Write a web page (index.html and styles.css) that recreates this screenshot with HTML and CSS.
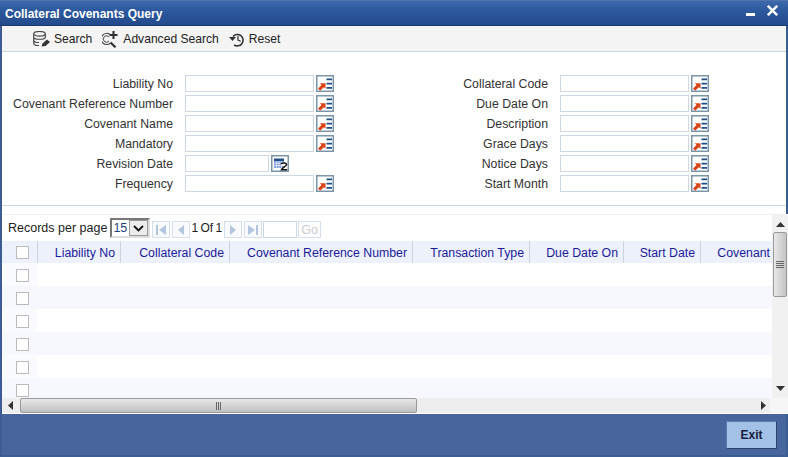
FILE: index.html
```html
<!DOCTYPE html>
<html lang="en">
<head>
<meta charset="utf-8">
<title>Collateral Covenants Query</title>
<link rel="stylesheet" href="styles.css">
</head>
<body>
<svg class="defs" width="0" height="0" aria-hidden="true">
  <defs>
    <symbol id="lov" viewBox="0 0 18 17">
      <rect x="0.750" y="0.750" width="16.500" height="15.500" fill="#fff" stroke="#7c94a8" stroke-width="1.500"/>
      <path d="M2 13.500 5.500 10 3.800 8.200H9.500V13.800L7.800 12.200 4.200 15.700Z" fill="#d9431a"/>
      <path d="M10.500 3.500h5.500v1.700h-5.500zM10.500 7.800h5.500v1.700h-5.500zM10.500 12h5.500v1.700h-5.500z" fill="#1f4f86"/>
    </symbol>
  </defs>
</svg>
<div class="window">
  <header class="titlebar">
    <h1 class="title">Collateral Covenants Query</h1>
    <div class="winctl">
      <svg class="win-min" width="9" height="3" viewBox="0 0 9 3"><rect width="9" height="3" fill="#fff"/></svg>
      <svg width="11" height="11" viewBox="0 0 11 11"><path d="M.8.8 10.200 10.200M10.200.8 .8 10.200" stroke="#fff" stroke-width="2.400" fill="none"/></svg>
    </div>
  </header>

  <nav class="toolbar">
    <span class="tool">
      <svg width="17" height="16" viewBox="0 0 17 16" fill="none" stroke="#444" stroke-width="1.100">
        <ellipse cx="6.500" cy="2.800" rx="5.800" ry="2.300"/>
        <path d="M.7 2.800v9.400c0 1.400 2.500 2.300 5.300 2.300M12.300 2.800v4.500M.7 6c0 1.400 2.600 2.300 5.800 2.300S12.300 7.400 12.300 6M.7 9.200c0 1.400 2.500 2.300 5.300 2.300"/>
        <path d="M8.500 15.500l1-3 4.500-4 3 2.500-4.500 4z" fill="#333" stroke="none"/>
      </svg>
      Search
    </span>
    <span class="tool">
      <svg width="17" height="17" viewBox="0 0 17 17" fill="none" stroke="#444">
        <path d="M8 3.500A5.500 5.500 0 1 0 8.500 12" stroke-width="1.200"/>
        <path d="M7 6A3.200 3.200 0 1 0 7 10" stroke-width="1"/>
        <path d="M8.500 11.500l5 4.800" stroke="#333" stroke-width="2.200"/>
        <path d="M11.500 0v8M7.500 4h8" stroke="#333" stroke-width="2.100"/>
      </svg>
      Advanced Search
    </span>
    <span class="tool">
      <svg width="16" height="15" viewBox="0 0 16 15" fill="none" stroke="#333" stroke-width="1.600">
        <path d="M4 4.500A5.700 5.700 0 1 1 5 12.800"/>
        <path d="M0 5h7L3.500 9Z" fill="#333" stroke="none"/>
        <path d="M9 4v4l2.700 1.300" stroke-width="1.200"/>
      </svg>
      Reset
    </span>
  </nav>

  <section class="form">
    <div class="field"><label>Liability No</label><span class="input"></span><svg class="lov"><use href="#lov"/></svg></div>
    <div class="field"><label>Collateral Code</label><span class="input"></span><svg class="lov"><use href="#lov"/></svg></div>
    <div class="field"><label>Covenant Reference Number</label><span class="input"></span><svg class="lov"><use href="#lov"/></svg></div>
    <div class="field"><label>Due Date On</label><span class="input"></span><svg class="lov"><use href="#lov"/></svg></div>
    <div class="field"><label>Covenant Name</label><span class="input"></span><svg class="lov"><use href="#lov"/></svg></div>
    <div class="field"><label>Description</label><span class="input"></span><svg class="lov"><use href="#lov"/></svg></div>
    <div class="field"><label>Mandatory</label><span class="input"></span><svg class="lov"><use href="#lov"/></svg></div>
    <div class="field"><label>Grace Days</label><span class="input"></span><svg class="lov"><use href="#lov"/></svg></div>
    <div class="field"><label>Revision Date</label><span class="input short"></span>
      <svg class="lov" viewBox="0 0 18 17">
        <rect x="0.750" y="0.750" width="16.500" height="15.500" fill="#fff" stroke="#7c94a8" stroke-width="1.500"/>
        <rect x="3" y="3.500" width="10" height="2.500" fill="#1f4f86"/>
        <rect x="3" y="6" width="10" height="7" fill="#7f9fdc"/>
        <path d="M5.500 6v7M8 6v7M10.500 6v7M3 8.300h10M3 10.600h10" stroke="#fff" stroke-width=".6"/>
        <path d="M10 9.200c.4-1.700 5.600-1.800 5.600.4 0 1.700-4.300 2.800-5.200 5.200h5.800" fill="#fff" stroke="#111" stroke-width="1.500"/>
      </svg>
    </div>
    <div class="field"><label>Notice Days</label><span class="input"></span><svg class="lov"><use href="#lov"/></svg></div>
    <div class="field"><label>Frequency</label><span class="input"></span><svg class="lov"><use href="#lov"/></svg></div>
    <div class="field"><label>Start Month</label><span class="input"></span><svg class="lov"><use href="#lov"/></svg></div>
  </section>
  <div class="gap"></div>

  <section class="results">
    <div class="results-main">
      <div class="pager">
        <span class="pager-label">Records per page</span>
        <span class="select"><span class="select-value">15</span><span class="select-btn"><svg width="11" height="7" viewBox="0 0 11 7"><path d="M1 1 5.500 5.500 10 1" fill="none" stroke="#111" stroke-width="1.800"/></svg></span></span>
        <span class="pbtn first"><svg width="12" height="12" viewBox="0 0 12 12"><path d="M1 1h2v10H1zM11 1v10L4 6z" fill="#b4c6de"/></svg></span>
        <span class="pbtn"><svg width="12" height="12" viewBox="0 0 12 12"><path d="M9 1v10L3 6z" fill="#b4c6de"/></svg></span>
        <span class="pages">1 Of 1</span>
        <span class="pbtn"><svg width="12" height="12" viewBox="0 0 12 12"><path d="M3 1v10l6-5z" fill="#b4c6de"/></svg></span>
        <span class="pbtn"><svg width="12" height="12" viewBox="0 0 12 12"><path d="M9 1h2v10H9zM1 1v10l7-5z" fill="#b4c6de"/></svg></span>
        <span class="pinput"></span>
        <span class="go">Go</span>
      </div>
      <div class="grid-head">
        <span class="cell-check"><i class="check"></i></span>
        <span class="th w1">Liability No</span>
        <span class="th w2">Collateral Code</span>
        <span class="th w3">Covenant Reference Number</span>
        <span class="th w4">Transaction Type</span>
        <span class="th w5">Due Date On</span>
        <span class="th w6">Start Date</span>
        <span class="th w7">Covenant</span>
      </div>
      <div class="grid-row"><span class="cell-check"><i class="check"></i></span></div>
      <div class="grid-row alt"><span class="cell-check"><i class="check"></i></span></div>
      <div class="grid-row"><span class="cell-check"><i class="check"></i></span></div>
      <div class="grid-row alt"><span class="cell-check"><i class="check"></i></span></div>
      <div class="grid-row"><span class="cell-check"><i class="check"></i></span></div>
      <div class="grid-row alt"><span class="cell-check"><i class="check"></i></span></div>
    </div>
    <div class="vscroll">
      <svg class="arrow" width="9" height="5" viewBox="0 0 9 5"><path d="M4.500 0 9 5H0z" fill="#333"/></svg>
      <div class="vthumb"><i></i><i></i><i></i><i></i></div>
      <svg class="arrow end" width="9" height="5" viewBox="0 0 9 5"><path d="M0 0h9L4.500 5z" fill="#333"/></svg>
    </div>
  </section>
  <div class="hscroll">
    <svg width="5" height="9" viewBox="0 0 5 9"><path d="M5 0v9L0 4.500z" fill="#333"/></svg>
    <div class="hthumb"><i></i><i></i><i></i></div>
    <svg class="harrow-end" width="5" height="9" viewBox="0 0 5 9"><path d="M0 0v9l5-4.500z" fill="#333"/></svg>
  </div>
  <footer class="footer">
    <button class="exit" type="button">Exit</button>
  </footer>
</div>
</body>
</html>
```

FILE: styles.css
```css
* { box-sizing: border-box; }
html, body { margin: 0; padding: 0; height: 100%; }
body { width: 788px; height: 457px; overflow: hidden; background: #3c5c94; font-family: "Liberation Sans", Arial, sans-serif; font-size: 12px; color: #222; }
.defs { display: block; height: 0; }
.window { display: flex; flex-direction: column; height: 457px; padding: 0 2px 2px 2px; background: #3c5c94; }

.titlebar { flex: none; height: 26px; margin: 0 -2px; padding: 3px 10px 0 5px; display: flex; justify-content: space-between; background: linear-gradient(#3f69ab 0, #2d5aa0 35%, #234a8b 100%); border-bottom: 1px solid #1c3a70; border-top: 1px solid #4f72ac; }
.title { margin: 0; font-size: 12px; font-weight: bold; line-height: 20px; color: #fff; }
.winctl { display: flex; gap: 12px; align-items: flex-start; padding-top: 1px; }
.win-min { margin-top: 8px; }

.toolbar { flex: none; height: 26px; padding: 1px 0 0 31px; display: flex; gap: 10px; align-items: center; background: #f4f4f4; border-bottom: 1px solid #ccd9e2; font-size: 12.100px; }
.tool { display: flex; align-items: center; gap: 4px; }

.form { flex: none; height: 154px; padding: 23px 0 0 0; display: grid; grid-template-columns: 375px 375px; grid-auto-rows: 20px; align-content: start; background: #fff; border-bottom: 1px solid #ccd9e2; }
.field { display: flex; align-items: flex-start; height: 20px; }
.field label { width: 171px; flex: none; text-align: right; line-height: 19px; font-size: 12.300px; color: #333; }
.input { flex: none; width: 129px; height: 17px; margin-left: 12px; background: #fff; border: 1px solid #ccd9e2; }
.input.short { width: 84px; }
.lov { flex: none; width: 18px; height: 17px; margin-left: 2px; }
.gap { flex: none; height: 8px; background: #fff; }

.results { flex: none; height: 184px; margin-right: -2px; display: flex; background: #fff; border-top: 1px solid #eef2f5; overflow: hidden; }
.results-main { width: 770px; flex: none; overflow: hidden; }
.pager { height: 26px; padding: 0 0 0 6px; display: flex; align-items: center; font-size: 12.500px; }
.pager-label { margin-right: 3px; color: #222; }
.select { width: 40px; height: 20px; display: flex; border: 2px solid #777; border-right-color: #ddd; border-bottom-color: #ddd; background: #fff; }
.select-value { flex: 1; padding-left: 1px; line-height: 16px; color: #1d3f7c; }
.select-btn { width: 19px; display: flex; align-items: center; justify-content: center; background: #ececec; border: 1px solid #999; }
.pbtn { width: 18px; height: 17px; margin: 3px 0 0 2px; display: flex; align-items: center; justify-content: center; border: 1px solid #d6e0ea; background: #f8fafc; }
.pages { margin: 0 0 0 1px; font-size: 12px; word-spacing: -1px; color: #222; }
.pinput { width: 34px; height: 17px; margin: 2px 0 0 1px; border: 1px solid #ccd9e2; }
.go { width: 23px; height: 17px; margin: 3px 0 0 1px; text-align: center; line-height: 16px; color: #ccc; border: 1px solid #d6e0ea; }

.grid-head { height: 22px; display: flex; background: #edf1fb; }
.cell-check { flex: none; width: 35px; height: 100%; padding-left: 14px; display: flex; align-items: center; background: #fafbfe; }
.grid-row .cell-check { padding-top: 2px; }
.grid-head .cell-check { background: #edf1fb; }
.check { display: block; width: 13px; height: 13px; background: #fff; border: 1px solid #bbb; }
.th { flex: none; height: 100%; padding-right: 5px; text-align: right; line-height: 24px; color: #1b1b9c; border-left: 1px solid #ccd3dd; font-size: 12.300px; white-space: nowrap; }
.w1 { width: 83px; }
.w2 { width: 109px; }
.w3 { width: 183px; }
.w4 { width: 117px; }
.w5 { width: 94px; }
.w6 { width: 77px; }
.w7 { width: 72px; padding-right: 2px; }
.grid-row { height: 23px; display: flex; background: #fff; }
.grid-row.alt { background: #f6f8fd; }
.grid-row.alt .cell-check { background: #f6f8fd; }

.vscroll { flex: none; width: 16px; display: flex; flex-direction: column; align-items: center; padding-top: 7px; background: #f1f1f1; }
.vthumb { width: 14px; height: 65px; margin-top: 5px; display: flex; flex-direction: column; gap: 1px; align-items: center; justify-content: center; background: linear-gradient(90deg, #e8e8e8, #c4c4c4); border: 1px solid #999; border-radius: 2px; }
.vthumb i { display: block; width: 8px; height: 1px; background: #666; }
.arrow.end { margin-top: auto; margin-bottom: 7px; }

.hscroll { flex: none; height: 16px; margin-right: -2px; padding-left: 6px; display: flex; align-items: center; background: linear-gradient(90deg, #eeeeee 768px, #f6f6f6 768px); border-bottom: 1px solid #fff; }
.hthumb { width: 397px; height: 15px; margin-left: 7px; display: flex; gap: 1px; align-items: center; justify-content: center; background: linear-gradient(#e8e8e8, #c0c0c0); border: 1px solid #999; border-radius: 2px; }
.hthumb i { display: block; width: 1px; height: 8px; background: #666; }
.harrow-end { margin-left: 344px; }

.footer { flex: 1; display: flex; justify-content: flex-end; align-items: flex-start; padding: 7px 9px 0 0; background: #48669e; }
.exit { width: 51px; height: 28px; padding: 0; font-family: inherit; font-size: 12px; font-weight: bold; color: #16223c; background: #a3c0e6; border: 1px solid #5c7db0; border-right-color: #2c4270; border-bottom-color: #2c4270; }
```
